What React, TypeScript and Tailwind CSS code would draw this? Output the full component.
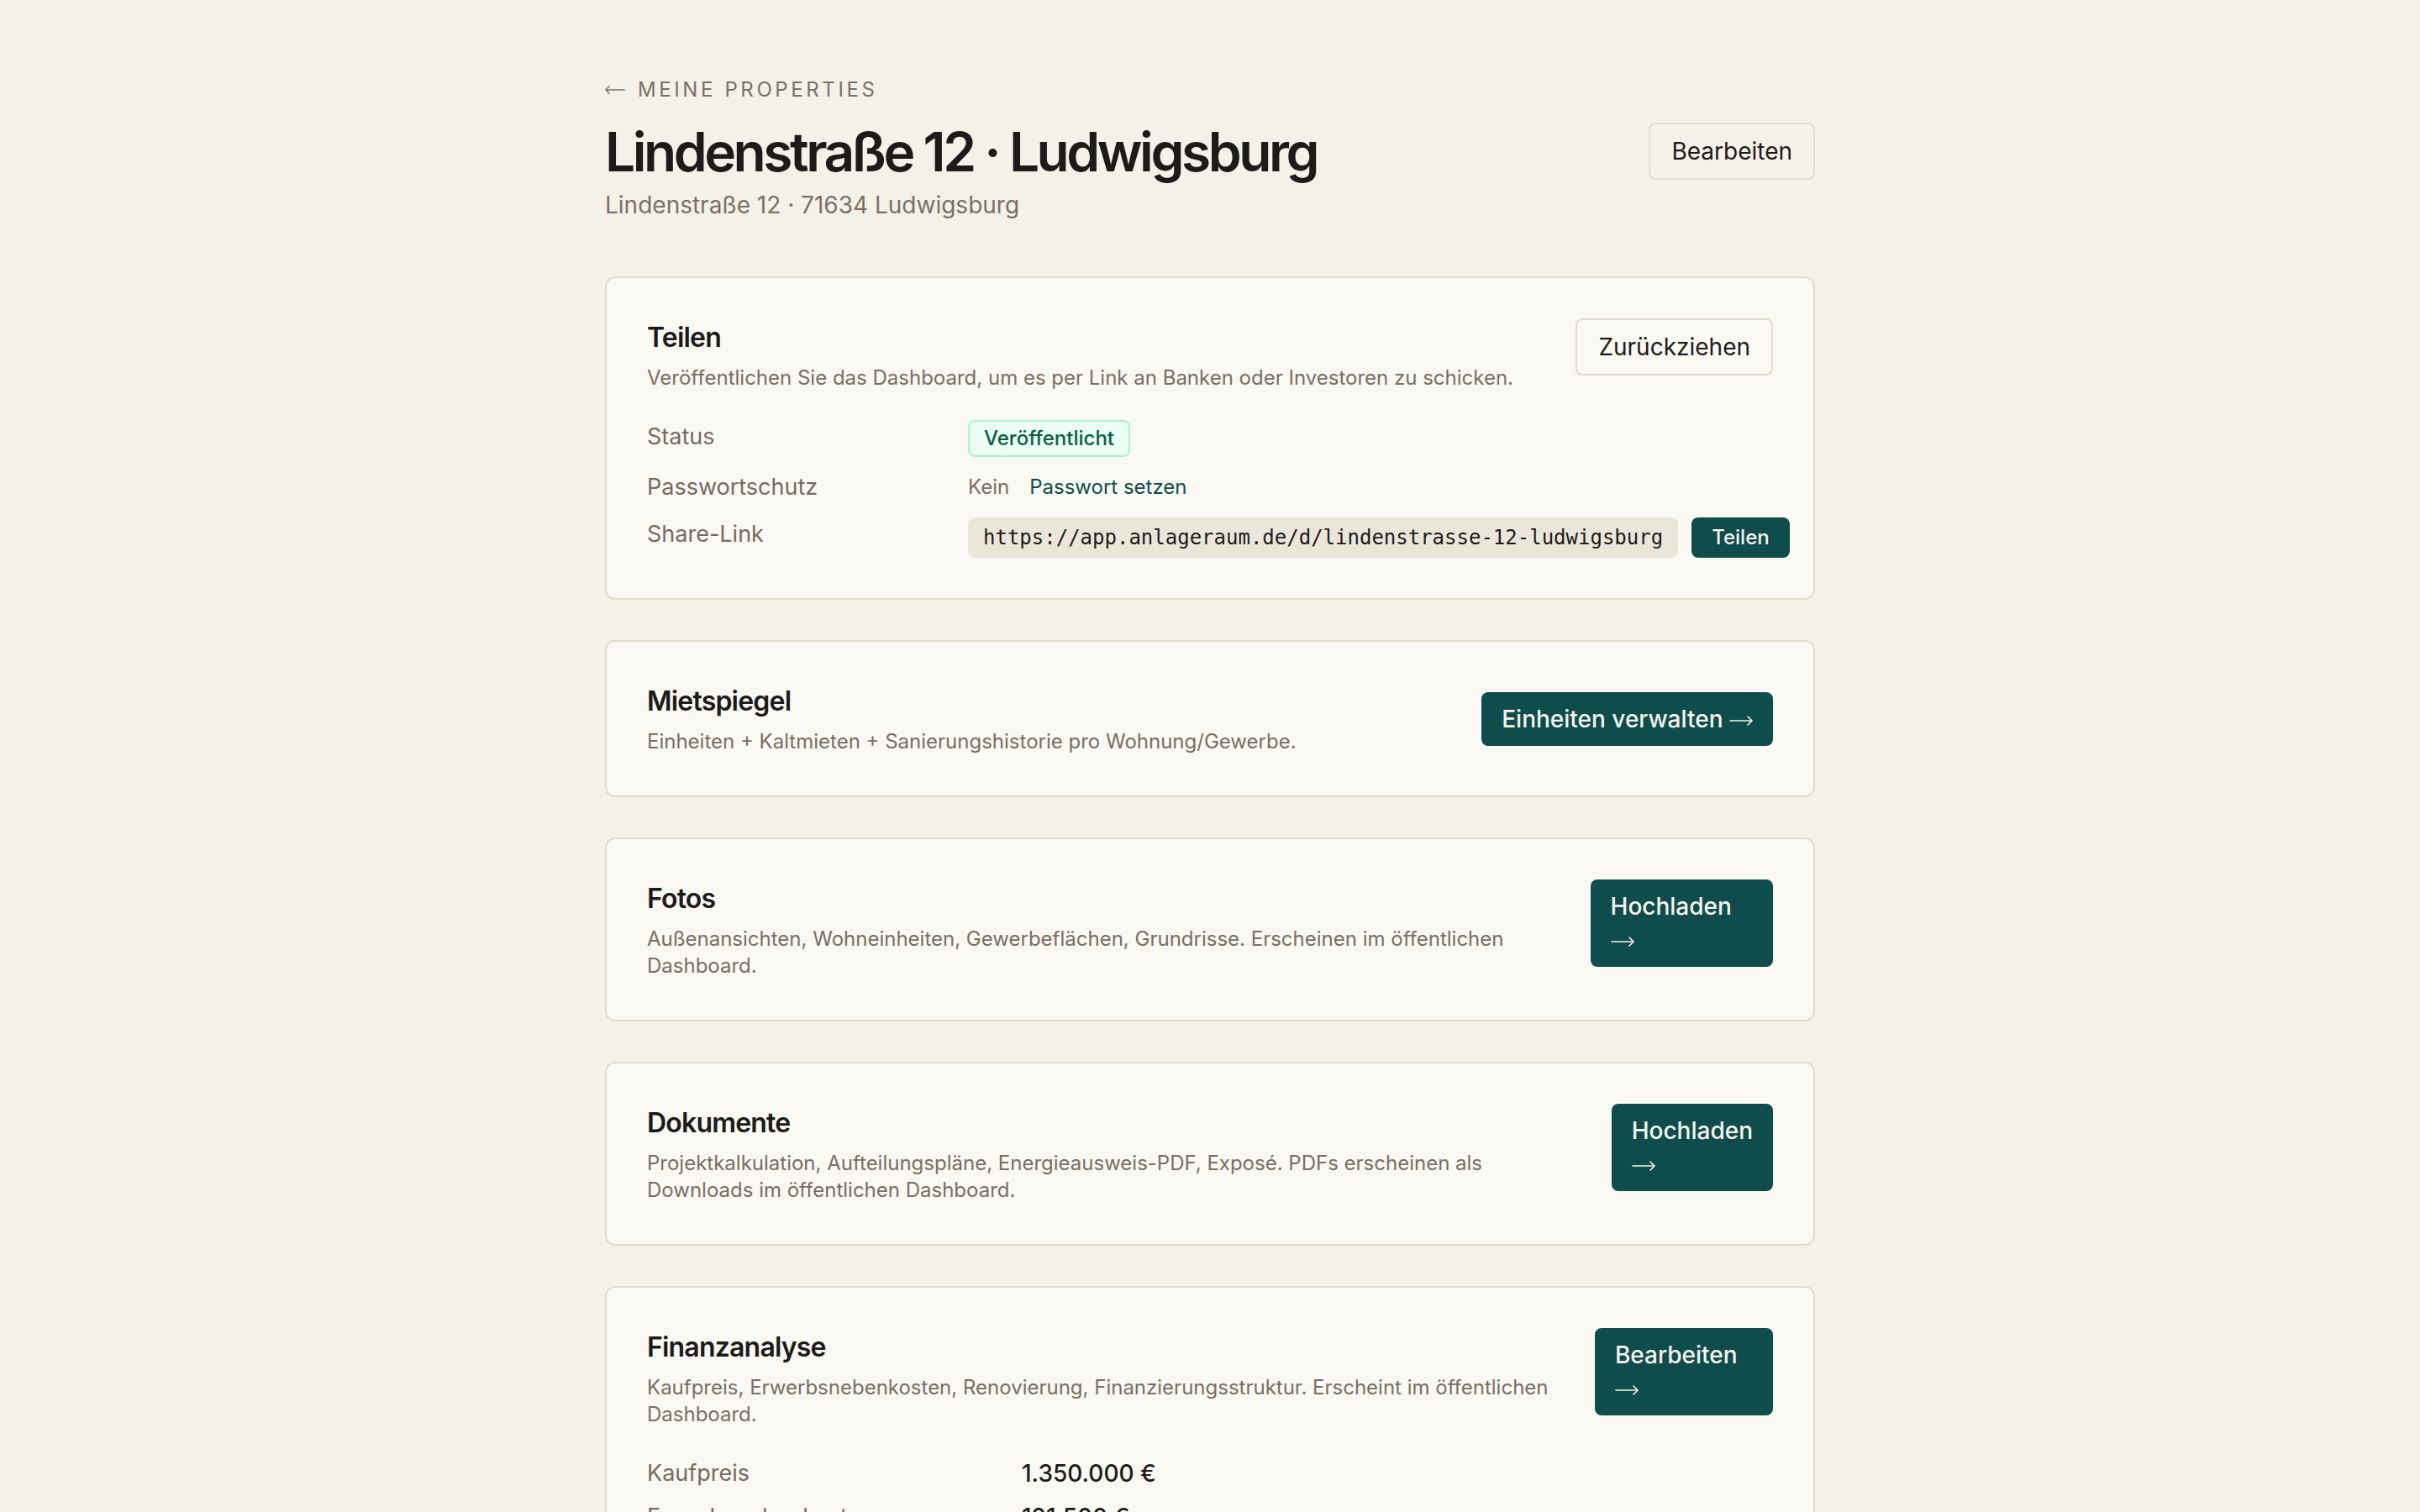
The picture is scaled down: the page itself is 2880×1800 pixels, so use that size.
const sans = "font-['Inter',_'Noto_Sans',_sans-serif]";

// thin long arrow with an open head, sized to the surrounding text
function Arrow({ dir = "right" }: { dir?: "left" | "right" }) {
  return (
    <svg
      viewBox="0 0 28 14"
      className="inline-block h-[0.5em] w-[1em] align-middle"
      fill="none"
      stroke="currentColor"
      strokeWidth={1.6}
      strokeLinecap="round"
      strokeLinejoin="round"
    >
      <path d={dir === "left" ? "M27 7H1M6 2L1 7l5 5" : "M1 7h26M22 2l5 5-5 5"} />
    </svg>
  );
}

function Card({ children }: { children: React.ReactNode }) {
  return (
    <section className="rounded-xl border-2 border-[#e3dccb] bg-[#faf8f3] p-12">
      {children}
    </section>
  );
}

function CardHead({ title, text }: { title: string; text: string }) {
  return (
    <div>
      <h2 className="text-[32px] leading-[46px] font-semibold tracking-tight text-[#1c1b19]">{title}</h2>
      <p className="mt-[9px] text-[24px] leading-8 text-[#786e64]">{text}</p>
    </div>
  );
}

function TealButton({ label }: { label: string }) {
  return (
    <button className="rounded-lg bg-[#0f4d4c] px-6 py-3 text-left text-[28px] leading-10 font-medium text-[#f6f3ec]">
      {label} <Arrow />
    </button>
  );
}

function Label({ children }: { children: React.ReactNode }) {
  return <div className="text-[27px] leading-10 text-[#756b62]">{children}</div>;
}

const finance = [
  ["Kaufpreis", "1.350.000 €"],
  ["Erwerbsnebenkosten", "121.500 €"],
  ["Renovierung", "240.000 €"],
  ["Gesamtinvestition", "1.711.500 €"],
];

export default function App() {
  return (
    <div className={`min-h-screen bg-[#f4f1e9] ${sans} text-[#1c1b19]`}>
      <div className="mx-auto w-[1440px] pt-[91px] pb-24">
        <a className="flex items-center gap-[15px] text-[24px] leading-8 tracking-[0.15em] uppercase text-[#7a7066]">
          <Arrow dir="left" />
          <span>Meine Properties</span>
        </a>

        <div className="mt-[23px] flex items-start justify-between">
          <div>
            <h1 className="text-[64px] leading-[70px] font-semibold tracking-[-0.054em] text-[#1c1b19]">
              Lindenstraße 12 · Ludwigsburg
            </h1>
            <p className="mt-2 text-[28px] leading-10 text-[#7a7066]">Lindenstraße 12 · 71634 Ludwigsburg</p>
          </div>
          <button className="rounded-lg border-2 border-[#e3dccb] px-[25px] py-3 text-[28px] leading-10 text-[#1c1b19]">
            Bearbeiten
          </button>
        </div>

        <div className="mt-[65px] flex flex-col gap-12">
          <Card>
            <div className="flex items-start justify-between gap-8">
              <CardHead
                title="Teilen"
                text="Veröffentlichen Sie das Dashboard, um es per Link an Banken oder Investoren zu schicken."
              />
              <button className="rounded-lg border-2 border-[#e3dccb] px-[25px] py-3 text-[28px] leading-10 text-[#1c1b19]">
                Zurückziehen
              </button>
            </div>

            <div className="mt-[34px] grid grid-cols-[382px_1fr] items-start gap-y-4">
              <Label>Status</Label>
              <div>
                <span className="inline-block rounded-lg border-2 border-[#a7f3d0] bg-[#ecfdf5] px-[17px] text-[24px] leading-10 font-medium text-[#065f46]">
                  Veröffentlicht
                </span>
              </div>

              <Label>Passwortschutz</Label>
              <div className="flex items-center gap-6 text-[24px] leading-10">
                <span className="text-[#786e64]">Kein</span>
                <a className="text-[#0f4d4c]">Passwort setzen</a>
              </div>

              <Label>Share-Link</Label>
              <div className="flex items-center gap-4 whitespace-nowrap">
                <code className="rounded-lg bg-[#ebe6da] px-[18px] py-[6px] font-['DejaVu_Sans_Mono',_monospace] text-[24px] leading-9 text-[#1c1b19]">
                  https://app.anlageraum.de/d/lindenstrasse-12-ludwigsburg
                </code>
                <button className="rounded-lg bg-[#0f4d4c] px-6 text-[24px] leading-[48px] font-medium text-[#f6f3ec]">
                  Teilen
                </button>
              </div>
            </div>
          </Card>

          <Card>
            <div className="flex items-center justify-between gap-8">
              <CardHead title="Mietspiegel" text="Einheiten + Kaltmieten + Sanierungshistorie pro Wohnung/Gewerbe." />
              <TealButton label="Einheiten verwalten" />
            </div>
          </Card>

          <Card>
            <div className="flex items-start justify-between gap-8">
              <CardHead
                title="Fotos"
                text="Außenansichten, Wohneinheiten, Gewerbeflächen, Grundrisse. Erscheinen im öffentlichen Dashboard."
              />
              <TealButton label="Hochladen" />
            </div>
          </Card>

          <Card>
            <div className="flex items-start justify-between gap-8">
              <CardHead
                title="Dokumente"
                text="Projektkalkulation, Aufteilungspläne, Energieausweis-PDF, Exposé. PDFs erscheinen als Downloads im öffentlichen Dashboard."
              />
              <TealButton label="Hochladen" />
            </div>
          </Card>

          <Card>
            <div className="flex items-start justify-between gap-8">
              <CardHead
                title="Finanzanalyse"
                text="Kaufpreis, Erwerbsnebenkosten, Renovierung, Finanzierungsstruktur. Erscheint im öffentlichen Dashboard."
              />
              <TealButton label="Bearbeiten" />
            </div>
            <div className="mt-[34px] grid grid-cols-[446px_1fr] gap-y-3">
              {finance.map(([k, v]) => (
                <div key={k} className="contents">
                  <Label>{k}</Label>
                  <div className="text-[28px] leading-10 font-medium text-[#1c1b19]">{v}</div>
                </div>
              ))}
            </div>
          </Card>
        </div>
      </div>
    </div>
  );
}
